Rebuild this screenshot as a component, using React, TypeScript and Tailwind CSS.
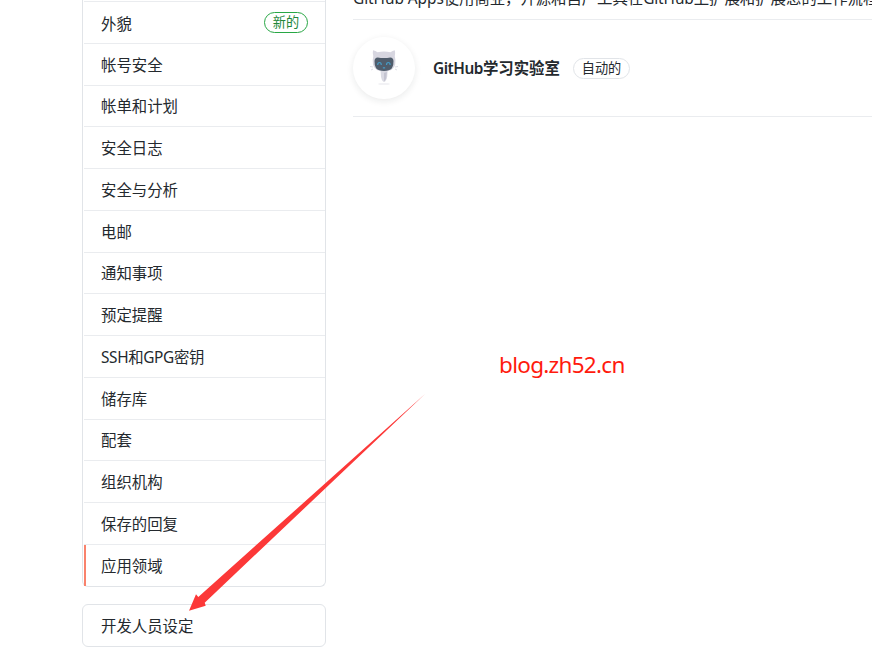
const rows = [
  { label: '外貌', height: 'h-[42px]', shift: 'top-[2px]', badge: '新的' },
  { label: '帐号安全', height: 'h-[42px]', shift: 'top-[1px]' },
  { label: '帐单和计划', height: 'h-[41px]', shift: 'top-0' },
  { label: '安全日志', height: 'h-[42px]', shift: 'top-[1px]' },
  { label: '安全与分析', height: 'h-[42px]', shift: 'top-[1px]' },
  { label: '电邮', height: 'h-[42px]', shift: 'top-[1px]' },
  { label: '通知事项', height: 'h-[41px]', shift: 'top-0' },
  { label: '预定提醒', height: 'h-[42px]', shift: 'top-[1px]' },
  { label: 'SSH和GPG密钥', height: 'h-[42px]', shift: 'top-[1px]' },
  { label: '储存库', height: 'h-[42px]', shift: 'top-[1px]' },
  { label: '配套', height: 'h-[41px]', shift: 'top-0' },
  { label: '组织机构', height: 'h-[42px]', shift: 'top-[1px]' },
  { label: '保存的回复', height: 'h-[42px]', shift: 'top-[1px]' },
  { label: '应用领域', height: 'h-[42px]', shift: 'top-[1px]', selected: true },
];

function Sidebar() {
  return (
    <nav className="w-[244px] shrink-0">
      <div className="rounded-b-[6px] border border-t-0 border-[#e1e4e8] pl-px">
        <div className="h-[2px] border-b border-[#eaecef]" />
        {rows.map((row, i) => (
          <div
            key={row.label}
            className={`relative flex items-center justify-between pr-[17px] pl-[17px] ${row.height} ${
              i < rows.length - 1 ? 'border-b border-[#eaecef]' : '-mb-px pb-px'
            }`}
          >
            {row.selected && <span className="absolute top-0 bottom-px left-0 w-[2px] bg-[#f9826c]" />}
            <span className={`relative ${row.shift} ${row.label.startsWith('SSH') ? 'tracking-[-0.36px]' : ''}`}>
              {row.label}
            </span>
            {row.badge && (
              <span className="flex h-[21px] w-[44px] items-center justify-center rounded-full border border-[#28a745] pt-px text-[13.2px] leading-none text-[#22863a]">
                {row.badge}
              </span>
            )}
          </div>
        ))}
      </div>
      <div className="mt-[17px] flex h-[43px] items-center rounded-[6px] border border-[#e1e4e8] pt-[2px] pl-[18px]">
        开发人员设定
      </div>
    </nav>
  );
}

function LabAvatar() {
  return (
    <div className="ml-px flex h-[62px] w-[62px] shrink-0 items-center justify-center rounded-full bg-white shadow-[0_2px_7px_rgba(27,31,35,0.09)]">
      <svg width="62" height="62" viewBox="0 0 62 62" aria-hidden="true">
        <ellipse cx="31" cy="47" rx="6" ry="0.6" fill="#e6e6ec" />
        <path d="M27.500 33h7.200l-.5 6.500q-1 4.500-2.400 5.200h-1.500q-1.700-1-2.300-5z" fill="#dadae3" />
        <path d="M31 36l2.800-1-.7 7-2.100 2.500z" fill="#c4c4d1" />
        <path d="M20 13.200q2.500.3 4.500 2 6.500-1.600 13 0 2-1.700 4.300-2 .8 3.200 0 6 1.200 4 .4 8.200-1.200 6.600-11.200 6.800-9.800-.2-11-6.800-.8-4.300.3-8.200-.9-2.800-.3-6z" fill="#d7d6e0" />
        <path d="M21.500 24q.2-3.200 3.200-3.500 6.300 1 12.600 0 3 .3 3.200 3.500.2 5-1.600 7.300-2.500 2.700-7.900 2.700t-7.900-2.700q-1.800-2.300-1.600-7.300z" fill="#4f5c6b" />
        <path d="M24.700 28q0-2.500 1.800-2.500t1.800 2.500M33.500 28q0-2.500 1.800-2.500t1.800 2.500M30 30.500q1 1 2 0" fill="none" stroke="#459bc5" strokeWidth="1.200" />
        <path d="M20 30l-3-.5M20 32l-2 1M42 30l3-.5M42 32l2 1" stroke="#d5d5df" strokeWidth="0.800" />
      </svg>
    </div>
  );
}

function Applications() {
  return (
    <main className="ml-[26px] flex w-[520px] shrink-0 flex-col">
      <div className="h-[20px] border-b border-[#eaecef] ml-px">
        <p className="-mt-[13px] h-[23px] whitespace-nowrap leading-[23px]">
          <span className="tracking-[-0.05px]">GitHub Apps使用商业，开源和自产工具在</span>
          <span className="tracking-[-0.1px]">GitHub</span>上扩展和扩展您的工作流程。
        </p>
      </div>
      <div className="ml-px flex h-[97px] items-center border-b border-[#eaecef]">
        <div className="-ml-px">
          <LabAvatar />
        </div>
        <span className="ml-[18px] w-[128px] whitespace-nowrap pt-px font-semibold">
          <span className="tracking-[-0.5px]">GitHub</span>学习实验室
        </span>
        <span className="ml-[12px] flex h-[21px] w-[57px] items-center justify-center rounded-full border border-[#e1e4e8] pt-px text-[13.2px] leading-none">
          自动的
        </span>
      </div>
      <p className="mt-[231px] ml-[147px] text-[22.5px] leading-[34px] tracking-[-0.7px] text-[#ff1a0d]">blog.zh52.cn</p>
    </main>
  );
}

export default function App() {
  return (
    <div className="relative flex h-[652px] w-[872px] overflow-hidden bg-white pl-[82px] font-['Noto_Sans','Noto_Sans_CJK_SC',sans-serif] text-[15.4px] leading-[23px] text-[#24292e]">
      <Sidebar />
      <Applications />
      <svg className="pointer-events-none absolute top-0 left-0" width="872" height="652" viewBox="0 0 872 652" aria-hidden="true">
        <path d="M425 394L198.300 597L196 594.300L189 610.700L205.700 605.700L204.700 602.700Z" fill="#fc3838" />
      </svg>
    </div>
  );
}
